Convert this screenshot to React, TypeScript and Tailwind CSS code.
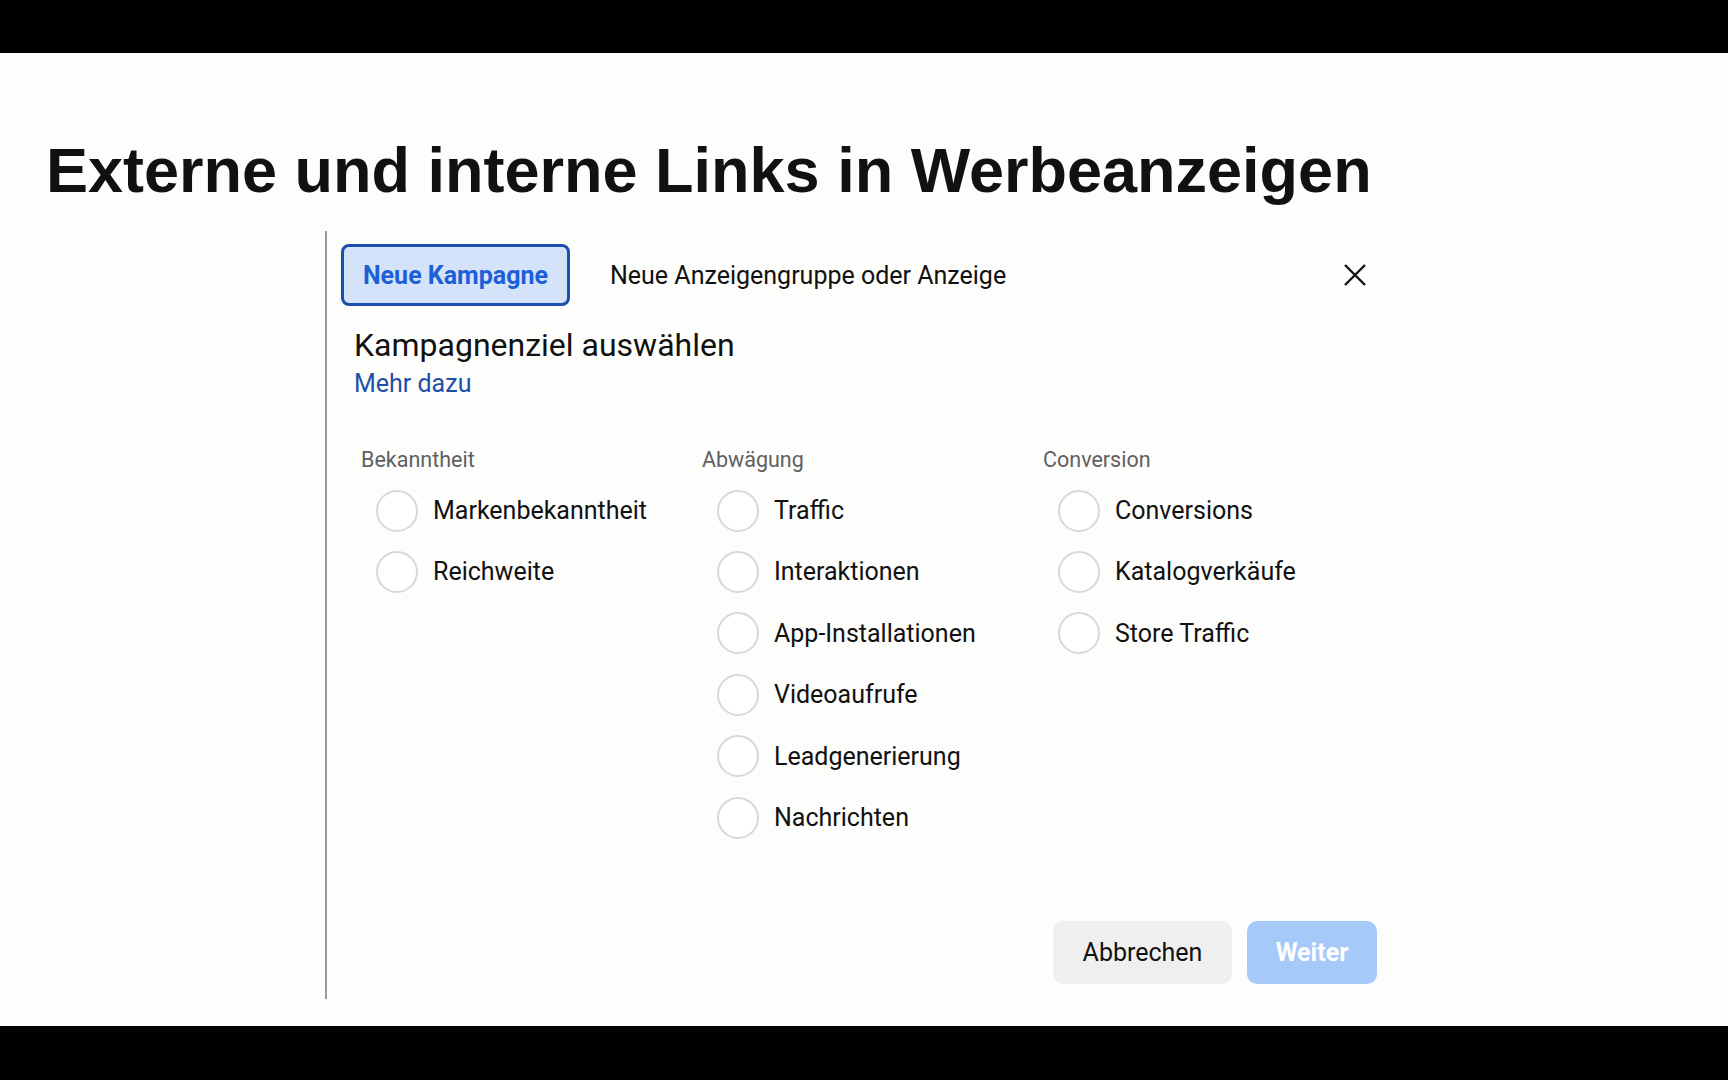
const groups = [
  { title: 'Bekanntheit', items: ['Markenbekanntheit', 'Reichweite'] },
  {
    title: 'Abwägung',
    items: ['Traffic', 'Interaktionen', 'App-Installationen', 'Videoaufrufe', 'Leadgenerierung', 'Nachrichten'],
  },
  { title: 'Conversion', items: ['Conversions', 'Katalogverkäufe', 'Store Traffic'] },
];

const Radio = ({ label }: { label: string }) => (
  <div className="flex h-[61.4px] items-center pl-[15px]">
    <span className="h-[42px] w-[42px] flex-shrink-0 rounded-full border-2 border-[#d8d8d8] bg-white" />
    <span className="ml-[15px] text-[25px] text-[#111]">{label}</span>
  </div>
);

const App = () => {
  return (
    <div className="flex h-[1080px] flex-col bg-[#fdfdfc] font-['Roboto',sans-serif]">
      <div className="h-[53px] bg-black" />

      <div className="flex flex-1 flex-col">
        <h1 className="ml-[46px] mt-[86px] font-['Liberation_Sans',Arial,sans-serif] text-[63px] font-bold leading-none text-[#111]">
          Externe und interne Links in Werbeanzeigen
        </h1>

        <div className="ml-[325px] mt-[29px] flex h-[768px] w-[1077px] flex-col border-l-2 border-[#9a9a9a] bg-[#fdfdfc] pl-[14px] pr-[25px] pt-[13px]">
          <div className="flex items-center pr-[11px]">
            <div className="flex h-[62px] w-[229px] items-center justify-center rounded-[8px] border-[3px] border-[#1b4fae] bg-[#d5e3fa] pt-[2px] text-[25px] font-bold text-[#1d5fd6]">
              Neue Kampagne
            </div>
            <div className="ml-[40px] pt-[2px] text-[25px] text-[#111]">Neue Anzeigengruppe oder Anzeige</div>
            <button className="ml-auto mr-[-1px] text-[#111]">
              <svg width="24" height="24" viewBox="0 0 24 24" fill="none" stroke="currentColor" strokeWidth="2.4">
                <path d="M2 2 L22 22 M22 2 L2 22" />
              </svg>
            </button>
          </div>

          <div className="ml-[13px] mt-[20px] text-[32px] leading-[38px] text-[#111]">Kampagnenziel auswählen</div>
          <div className="ml-[13px] mt-[5px] text-[25px] leading-[30px] text-[#1d4fa8]">Mehr dazu</div>

          <div className="ml-[20px] mt-[48px] flex">
            {groups.map((g) => (
              <div key={g.title} className="w-[341px] flex-shrink-0">
                <div className="text-[21.5px] leading-[26px] text-[#606060]">{g.title}</div>
                <div className="mt-[7px] flex flex-col">
                  {g.items.map((item) => (
                    <Radio key={item} label={item} />
                  ))}
                </div>
              </div>
            ))}
          </div>

          <div className="mt-auto mb-[15px] flex justify-end gap-[15px]">
            <button className="h-[63px] w-[179px] rounded-[10px] bg-[#efefef] text-[25px] text-[#111]">Abbrechen</button>
            <button className="h-[63px] w-[130px] rounded-[10px] bg-[#a5c9f9] text-[25px] font-bold text-white">Weiter</button>
          </div>
        </div>
      </div>

      <div className="h-[54px] bg-black" />
    </div>
  );
};

export default App;
